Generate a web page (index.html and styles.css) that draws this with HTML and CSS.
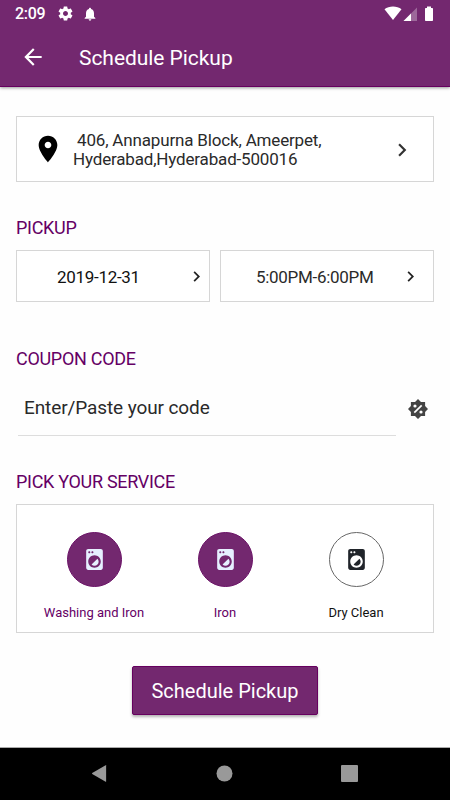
FILE: index.html
```html
<!DOCTYPE html>
<html lang="en">
<head>
    <meta charset="UTF-8">
    <meta name="viewport" content="width=device-width, initial-scale=1">
    <title>Schedule Pickup</title>
    <link rel="stylesheet" href="styles.css">
</head>
<body>
    <svg width="0" height="0" class="sprite">
        <symbol id="chevron" viewBox="0 0 24 24">
            <path d="M10 6L8.59 7.41 13.17 12l-4.58 4.59L10 18l6-6z"/>
        </symbol>
        <symbol id="washer" viewBox="0 0 24 24">
            <path d="M9.17 16.83c1.56 1.56 4.1 1.56 5.66 0 1.56-1.56 1.56-4.1 0-5.66l-5.66 5.66zM18 2.01L6 2c-1.11 0-2 .89-2 2v16c0 1.11.89 2 2 2h12c1.11 0 2-.89 2-2V4c0-1.11-.89-1.99-2-1.99zM10 4c.55 0 1 .45 1 1s-.45 1-1 1-1-.45-1-1 .45-1 1-1zM7 4c.55 0 1 .45 1 1s-.45 1-1 1-1-.45-1-1 .45-1 1-1zm5 16c-3.31 0-6-2.69-6-6s2.69-6 6-6 6 2.69 6 6-2.69 6-6 6z"/>
        </symbol>
    </svg>

    <header>
        <div class="status-bar">
            <span class="clock">2:09</span>
            <svg class="gear" viewBox="0 0 24 24"><path d="M19.43 12.98c.04-.32.07-.64.07-.98s-.03-.66-.07-.98l2.11-1.65c.19-.15.24-.42.12-.64l-2-3.46c-.12-.22-.39-.3-.61-.22l-2.49 1c-.52-.4-1.08-.73-1.69-.98l-.38-2.65C14.46 2.18 14.25 2 14 2h-4c-.25 0-.46.18-.49.42l-.38 2.65c-.61.25-1.17.59-1.69.98l-2.49-1c-.23-.09-.49 0-.61.22l-2 3.46c-.13.22-.07.49.12.64l2.11 1.65c-.04.32-.07.65-.07.98s.03.66.07.98l-2.11 1.65c-.19.15-.24.42-.12.64l2 3.46c.12.22.39.3.61.22l2.49-1c.52.4 1.08.73 1.69.98l.38 2.65c.03.24.24.42.49.42h4c.25 0 .46-.18.49-.42l.38-2.65c.61-.25 1.17-.59 1.69-.98l2.49 1c.23.09.49 0 .61-.22l2-3.46c.12-.22.07-.49-.12-.64l-2.11-1.65zM12 15.5c-1.93 0-3.5-1.57-3.5-3.5s1.57-3.5 3.5-3.5 3.5 1.57 3.5 3.5-1.57 3.5-3.5 3.5z"/></svg>
            <svg class="bell" viewBox="0 0 24 24"><path d="M12 22c1.1 0 2-.9 2-2h-4c0 1.1.89 2 2 2zm6-6v-5c0-3.07-1.64-5.64-4.5-6.32V4c0-.83-.67-1.5-1.5-1.5s-1.5.67-1.5 1.5v.68C7.63 5.36 6 7.92 6 11v5l-2 2v1h16v-1l-2-2z"/></svg>
            <svg class="signals" viewBox="0 0 52 16">
                <path d="M0.5 3.2C5 -.5 13 -.5 17.5 3.2L9 14z"/>
                <path d="M33 1.5V15H19.5z" opacity=".3"/>
                <path d="M27 7.5V15h-7.5z"/>
                <path d="M43 0.5h4V2h1.2q.8 0 .8.8v11.4q0 .8-.8.8h-6.4q-.8 0-.8-.8V2.8q0-.8.8-.8H43z"/>
            </svg>
        </div>
        <div class="app-bar">
            <svg class="back" viewBox="0 0 24 24"><path d="M20 11H7.83l5.59-5.59L12 4l-8 8 8 8 1.41-1.41L7.83 13H20v-2z"/></svg>
            <h1>Schedule Pickup</h1>
        </div>
    </header>

    <main>
        <div class="box address">
            <svg class="pin" viewBox="0 0 24 24"><path d="M12 2C8.13 2 5 5.13 5 9c0 5.25 7 13 7 13s7-7.75 7-13c0-3.87-3.13-7-7-7zm0 9.5c-1.38 0-2.5-1.12-2.5-2.5s1.12-2.5 2.5-2.5 2.5 1.12 2.5 2.5-1.12 2.5-2.5 2.5z"/></svg>
            <p><span class="line1">406, Annapurna Block, Ameerpet,</span><br>Hyderabad,Hyderabad-500016</p>
            <svg class="chevron-lg"><use href="#chevron"/></svg>
        </div>

        <h2>PICKUP</h2>
        <div class="pickup">
            <div class="box slot date">
                <span>2019-12-31</span>
                <svg class="chevron-sm"><use href="#chevron"/></svg>
            </div>
            <div class="box slot time">
                <span>5:00PM-6:00PM</span>
                <svg class="chevron-sm"><use href="#chevron"/></svg>
            </div>
        </div>

        <h2 class="coupon-title">COUPON CODE</h2>
        <div class="coupon">
            <div class="code">Enter/Paste your code</div>
            <svg class="offer" viewBox="0 0 20 20">
                <path class="badge" d="M10 0l3 2.9h4.1V7l2.9 3-2.9 3v4.1H13L10 20l-3-2.9H2.9V13L0 10l2.9-3V2.9H7z"/>
                <path class="slash" d="M6.3 13.7l7.4-7.4"/>
                <circle cx="7" cy="7" r="1.6"/>
                <circle cx="13" cy="13" r="1.6"/>
            </svg>
        </div>

        <h2 class="service-title">PICK YOUR SERVICE</h2>
        <div class="box services">
            <div class="service selected">
                <div class="circle"><svg><use href="#washer"/></svg></div>
                <span>Washing and Iron</span>
            </div>
            <div class="service selected">
                <div class="circle"><svg><use href="#washer"/></svg></div>
                <span>Iron</span>
            </div>
            <div class="service">
                <div class="circle"><svg><use href="#washer"/></svg></div>
                <span>Dry Clean</span>
            </div>
        </div>

        <button>Schedule Pickup</button>
    </main>

    <footer>
        <svg viewBox="0 0 16 18"><path d="M15 .5v17q0 .5-.5.3L.3 9.5q-.5-.5 0-1L14.5.2q.5-.2.5.3z"/></svg>
        <svg viewBox="0 0 17 17"><circle cx="8.5" cy="8.5" r="8"/></svg>
        <svg viewBox="0 0 17 17"><rect width="17" height="17" rx="1"/></svg>
    </footer>
</body>
</html>
```
FILE: styles.css
```css
* {
    box-sizing: border-box;
}
body {
    margin: 0;
    height: 800px;
    display: flex;
    flex-direction: column;
    font-family: Roboto, sans-serif;
    background: #fefefe;
    color: #2a2a2a;
}
svg {
    display: block;
    flex: none;
}
.sprite {
    position: absolute;
}
header {
    height: 87px;
    background: #73286f;
    border-bottom: 1px solid #66005f;
    box-shadow: 0 1px 3px rgba(0, 0, 0, 0.4);
    color: #fff;
    fill: #fff;
}
.status-bar {
    height: 27px;
    padding: 0 15px;
    display: flex;
    align-items: center;
}
.clock {
    width: 42px;
    font-size: 16px;
    font-weight: 500;
    letter-spacing: -0.3px;
}
.gear {
    width: 17px;
    height: 17px;
}
.bell {
    width: 16px;
    height: 16px;
    margin-left: 8px;
}
.signals {
    width: 52px;
    height: 16px;
    margin: 0 -1px 0 auto;
}
.app-bar {
    height: 59px;
    padding-left: 20px;
    display: flex;
    align-items: center;
}
.back {
    width: 26px;
    height: 26px;
}
h1 {
    margin: 2px 0 0 33px;
    font-size: 21px;
    font-weight: 400;
    letter-spacing: -0.05px;
}
main {
    flex: 1;
    padding: 29px 16px 0;
}
.box {
    background: #fff;
    border: 1px solid #d6d6d6;
}
.address {
    width: 418px;
    height: 66px;
    padding: 0 18px 0 15px;
    display: flex;
    align-items: center;
}
.pin {
    width: 32px;
    height: 32px;
    fill: #000;
}
.address p {
    flex: 1;
    margin: 2px 0 0 9px;
    font-size: 17px;
    letter-spacing: -0.17px;
    line-height: 19.5px;
}
.line1 {
    margin-left: 4px;
}
.chevron-lg {
    width: 26px;
    height: 26px;
    margin-top: 1px;
    fill: #333;
}
h2 {
    margin: 34px 0 0;
    font-size: 18px;
    font-weight: 400;
    letter-spacing: -0.3px;
    line-height: 24px;
    color: #650065;
}
.pickup {
    display: flex;
    gap: 10px;
    margin-top: 10px;
}
.slot {
    height: 52px;
    display: flex;
    align-items: center;
    justify-content: space-between;
    font-size: 17px;
    letter-spacing: -0.3px;
    padding-top: 1px;
}
.date {
    width: 194px;
    padding-left: 40px;
    padding-right: 2px;
    color: #111;
}
.time {
    width: 214px;
    padding-left: 35px;
    padding-right: 12px;
}
.chevron-sm {
    width: 21px;
    height: 21px;
    fill: #222;
}
.coupon-title {
    margin-top: 45px;
}
.coupon {
    display: flex;
    align-items: center;
    gap: 12px;
    padding-left: 2px;
    height: 65px;
}
.code {
    width: 378px;
    height: 65px;
    padding-left: 6px;
    border-bottom: 1px solid #ddd;
    font-size: 19px;
    letter-spacing: -0.1px;
    line-height: 74px;
}
.offer {
    width: 20px;
    height: 20px;
    margin-top: 11px;
    fill: #fff;
}
.badge {
    fill: #444;
}
.slash {
    stroke: #fff;
    stroke-width: 1.7;
}
.service-title {
    margin-top: 34px;
}
.services {
    width: 418px;
    height: 129px;
    margin-top: 10px;
    padding: 27px 12px 0 11.5px;
    display: grid;
    grid-template-columns: repeat(3, 131px);
}
.service {
    display: flex;
    flex-direction: column;
    align-items: center;
    font-size: 13px;
    color: #111;
}
.circle {
    width: 55px;
    height: 55px;
    margin-bottom: 18px;
    border: 1px solid #666;
    border-radius: 50%;
    display: flex;
    align-items: center;
    justify-content: center;
    fill: #20242a;
}
.circle svg {
    width: 25px;
    height: 25px;
}
.selected {
    color: #650065;
}
.selected .circle {
    background: #73286f;
    border-color: #6a1166;
    fill: #e6f0ff;
}
button {
    display: block;
    width: 186px;
    height: 49px;
    margin: 33px 0 0 116px;
    padding: 1px 0 0;
    border: 1px solid #66005f;
    border-radius: 2px;
    background: #73286f;
    box-shadow: 0 2px 3px rgba(0, 0, 0, 0.3);
    color: #fff;
    font-family: inherit;
    font-size: 20px;
}
footer {
    height: 53px;
    padding: 0 92px 1px 91px;
    border-top: 1px solid #aaa;
    background: #000;
    display: flex;
    align-items: center;
    justify-content: space-between;
    fill: #999;
}
footer svg {
    width: 17px;
    height: 17px;
}
```
